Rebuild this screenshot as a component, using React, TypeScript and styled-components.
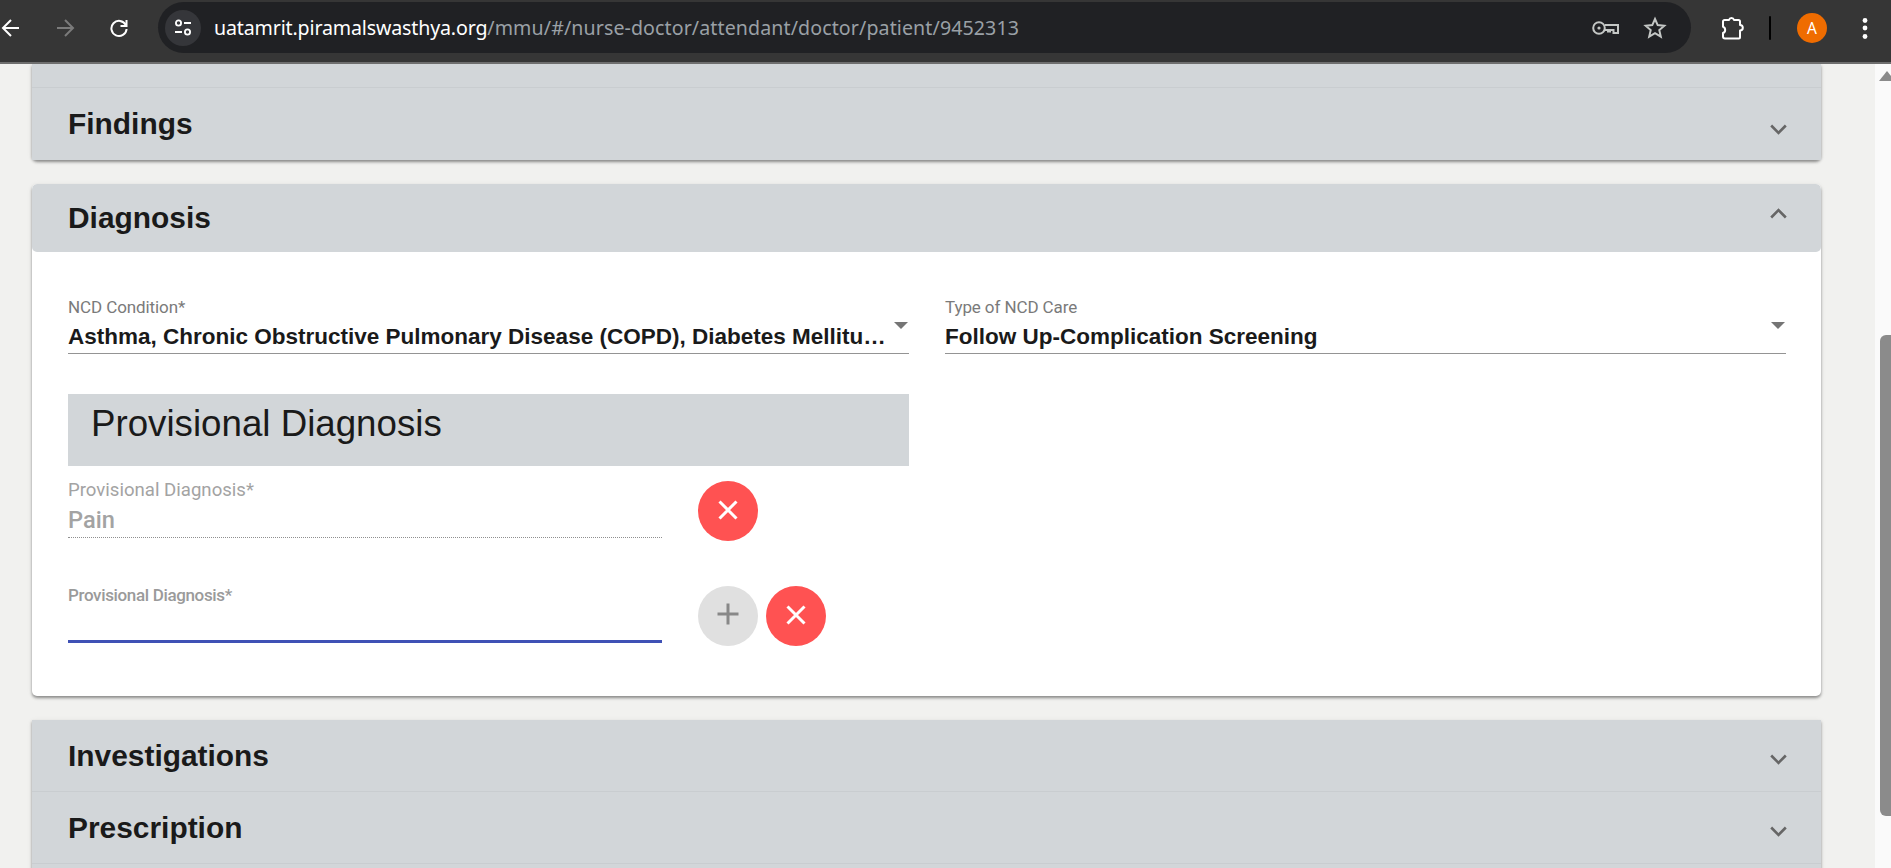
import React from "react";
import styled, { createGlobalStyle } from "styled-components";

const Global = createGlobalStyle`
  html, body { margin: 0; padding: 0; height: 100%; overflow: hidden; background: #f1f1ef; }
  #root { height: 100%; }
  * { box-sizing: border-box; }
`;

const Shell = styled.div`
  width: 1891px;
  height: 868px;
  display: flex;
  flex-direction: column;
  overflow: hidden;
  font-family: Roboto, "Liberation Sans", sans-serif;
`;

const Toolbar = styled.header`
  flex: none;
  height: 64px;
  background: #363636;
  border-bottom: 2px solid #6e6e6e;
  display: flex;
  align-items: flex-start;
  padding-top: 2px;
`;

const NavGroup = styled.nav`
  display: flex;
  margin-left: -16px;
  margin-right: 12px;
  height: 51px;
`;

const NavSlot = styled.div`
  width: 54px;
  height: 51px;
  display: flex;
  align-items: center;
  justify-content: center;
  color: ${(p: { $dim?: boolean }) => (p.$dim ? "#7b7b7b" : "#ffffff")};
`;

const Omnibox = styled.div`
  width: 1533px;
  height: 51px;
  background: #202124;
  border-radius: 26px;
  display: flex;
  align-items: center;
  padding: 0 12px 0 7px;
`;

const SiteChip = styled.div`
  width: 36px;
  height: 36px;
  border-radius: 50%;
  background: #35363a;
  display: flex;
  align-items: center;
  justify-content: center;
  color: #fff;
  margin-right: 13px;
`;

const Url = styled.div`
  flex: 1;
  font-family: "Noto Sans", sans-serif;
  font-size: 19.6px;
  letter-spacing: 0.1px;
  color: #9aa0a6;
  white-space: nowrap;
`;

const Host = styled.span`
  color: #ffffff;
  letter-spacing: -0.15px;
`;

const OmniIcon = styled.div`
  width: 48px;
  display: flex;
  justify-content: center;
  color: #c4c7c5;
`;

const ToolArea = styled.div`
  flex: 1;
  height: 51px;
  display: flex;
  align-items: center;
  color: #fff;
  padding-left: 29px;
`;

const Separator = styled.div`
  width: 2px;
  height: 24px;
  border-radius: 1px;
  background: #000;
  margin: 0 26px 0 24px;
`;

const Avatar = styled.div`
  width: 30px;
  height: 30px;
  border-radius: 50%;
  background: #ef6c00;
  color: #fff;
  font-size: 15.5px;
  font-family: "Noto Sans", sans-serif;
  display: flex;
  align-items: center;
  justify-content: center;
  margin-right: 35px;
`;

const Body = styled.div`
  flex: 1;
  min-height: 0;
  display: flex;
`;

const Page = styled.main`
  flex: 1;
  min-width: 0;
  padding: 0 54px 0 32px;
  overflow: hidden;
  display: flex;
  flex-direction: column;
  gap: 24px;
`;

const Group = styled.section`
  flex: none;
  border-radius: 0 0 5px 5px;
  box-shadow: 0 2px 3px rgba(0, 0, 0, 0.4), 0 1px 6px rgba(0, 0, 0, 0.06);
  background: #d2d6d9;
`;

const Stub = styled.div`
  height: 24px;
  border-bottom: 1px solid #c9cdd0;
`;

const PanelHeader = styled.div<{ $divider?: boolean }>`
  height: 72px;
  background: #d2d6d9;
  display: flex;
  align-items: center;
  justify-content: space-between;
  padding: 0 34px 0 36px;
  border-bottom: ${(p) => (p.$divider ? "1px solid #c9cdd0" : "0")};
`;

const PanelTitle = styled.h2`
  margin: 0;
  font-family: "Liberation Sans", Arial, sans-serif;
  font-size: 29.9px;
  font-weight: 700;
  color: #1a1a1a;
`;

const Chevron = styled.svg<{ $offset: number }>`
  width: 17px;
  height: 11px;
  color: #666;
  transform: translateY(${(p) => p.$offset}px);
`;

const Card = styled.section`
  flex: none;
  border-radius: 5px;
  background: #fff;
  box-shadow: 0 2px 3px rgba(0, 0, 0, 0.4), 0 1px 6px rgba(0, 0, 0, 0.06);
  overflow: hidden;
`;

const RoundedHeader = styled(PanelHeader)`
  height: 68px;
  border-radius: 5px;
`;

const CardBody = styled.div`
  padding: 46px 36px 50px;
  display: grid;
  grid-template-columns: 841px 841px;
  column-gap: 36px;
  align-items: start;
`;

const SelectField = styled.div`
  position: relative;
  height: 56px;
  border-bottom: 1px solid #949494;
  display: flex;
  flex-direction: column;
`;

const FloatLabel = styled.label<{ $variant: "select" | "rest" | "focus" }>`
  display: block;
  font-size: ${(p) => (p.$variant === "rest" ? 18.6 : 17)}px;
  line-height: 18px;
  font-weight: ${(p) => (p.$variant === "focus" ? 500 : 400)};
  letter-spacing: ${(p) => (p.$variant === "focus" ? "-0.35px" : p.$variant === "select" ? "-0.1px" : "0")};
  color: ${(p) => (p.$variant === "select" ? "#7a7a7a" : p.$variant === "rest" ? "#a3a3a3" : "#9a9a9a")};
  white-space: nowrap;
`;

const SelectValue = styled.div`
  margin-top: 7px;
  font-family: "Liberation Sans", Arial, sans-serif;
  font-size: 22.5px;
  line-height: 28px;
  font-weight: 700;
  color: #1a1a1a;
  white-space: nowrap;
`;

const Caret = styled.span`
  position: absolute;
  right: 1px;
  top: 24px;
  width: 0;
  height: 0;
  border-left: 7px solid transparent;
  border-right: 7px solid transparent;
  border-top: 7px solid #757575;
`;

const LeftColumn = styled.div`
  margin-top: 40px;
  grid-column: 1;
`;

const SectionBand = styled.div`
  height: 72px;
  background: #d2d6d9;
  padding: 8px 23px 0;
  font-family: "Liberation Sans", Arial, sans-serif;
  font-size: 36.7px;
  line-height: 44px;
  color: #1a1a1a;
`;

const DiagRow = styled.div<{ $top: number }>`
  margin-top: ${(p) => p.$top}px;
  display: flex;
  align-items: flex-start;
`;

const InputField = styled.div`
  width: 594px;
`;

const DisabledValue = styled.div`
  height: 32px;
  margin-top: 7px;
  font-size: 23.6px;
  line-height: 29px;
  font-weight: 500;
  color: #a3a3a3;
  border-bottom: 1px dotted #8f8f8f;
`;

const FocusLine = styled.div`
  margin-top: 36px;
  height: 3px;
  background: #3f51b5;
`;

const Actions = styled.div`
  margin-left: 36px;
  display: flex;
  gap: 8px;
`;

const RoundButton = styled.button<{ $kind: "add" | "remove" }>`
  width: 60px;
  height: 60px;
  padding: 0 0 ${(p) => (p.$kind === "remove" ? 2 : 4)}px;
  border: 0;
  border-radius: 50%;
  display: flex;
  align-items: center;
  justify-content: center;
  background: ${(p) => (p.$kind === "remove" ? "#ff5252" : "#e0e0e0")};
  color: ${(p) => (p.$kind === "remove" ? "#ffffff" : "#888888")};
`;

const ScrollTrack = styled.aside`
  flex: none;
  width: 16px;
  background: #fafafa;
  display: flex;
  flex-direction: column;
  align-items: flex-end;
`;

const ScrollArrow = styled.div`
  margin: 7px -4px 0 0;
  width: 0;
  height: 0;
  border-left: 8px solid transparent;
  border-right: 8px solid transparent;
  border-bottom: 10px solid #8a8a8a;
`;

const ScrollThumb = styled.div`
  margin-top: 254px;
  width: 11px;
  height: 481px;
  background: #8b8b8b;
  border-radius: 6px 0 0 6px;
`;

const ChevDown = ({ offset = 4 }: { offset?: number }) => (
  <Chevron $offset={offset} viewBox="0 0 17 11" fill="none" stroke="currentColor" strokeWidth="2.6">
    <path d="M1.2 1.5 8.5 8.8 15.8 1.5" />
  </Chevron>
);

const ChevUp = () => (
  <Chevron $offset={-5} viewBox="0 0 17 11" fill="none" stroke="currentColor" strokeWidth="2.6">
    <path d="M1.2 9.5 8.5 2.2 15.8 9.5" />
  </Chevron>
);

const CloseIcon = () => (
  <svg width="22" height="22" viewBox="0 0 22 22" fill="none" stroke="currentColor" strokeWidth="3">
    <path d="M2.5 2.5 19.5 19.5M19.5 2.5 2.5 19.5" />
  </svg>
);

const PlusIcon = () => (
  <svg width="22" height="22" viewBox="0 0 22 22" fill="none" stroke="currentColor" strokeWidth="3">
    <path d="M11 .5V21.5M.5 11H21.5" />
  </svg>
);

export default function App() {
  return (
    <Shell>
      <Global />
      <Toolbar>
        <NavGroup>
          <NavSlot>
            <svg width="20" height="20" viewBox="0 0 20 20" fill="none" stroke="currentColor" strokeWidth="2">
              <path d="M18 10H2.5M10 2 2 10l8 8" />
            </svg>
          </NavSlot>
          <NavSlot $dim>
            <svg width="20" height="20" viewBox="0 0 20 20" fill="none" stroke="currentColor" strokeWidth="2">
              <path d="M2 10h15.5M10 2l8 8-8 8" />
            </svg>
          </NavSlot>
          <NavSlot>
            <svg width="20" height="20" viewBox="0 0 20 20" fill="none" stroke="currentColor" strokeWidth="2">
              <path d="M16.8 7A7.6 7.6 0 1 0 17.6 11" />
              <path d="M17.5 2v6h-6" />
            </svg>
          </NavSlot>
        </NavGroup>
        <Omnibox>
          <SiteChip>
            <svg width="20" height="20" viewBox="0 0 20 20" fill="none" stroke="currentColor" strokeWidth="1.8">
              <circle cx="5.5" cy="5" r="2.6" />
              <path d="M11 5h7M2 14h7" />
              <circle cx="14.5" cy="14" r="2.6" />
            </svg>
          </SiteChip>
          <Url>
            <Host>uatamrit.piramalswasthya.org</Host>/mmu/#/nurse-doctor/attendant/doctor/patient/9452313
          </Url>
          <OmniIcon>
            <svg width="27" height="14" viewBox="0 0 27 14" fill="none" stroke="currentColor" strokeWidth="2" style={{ marginLeft: -4 }}>
              <circle cx="7" cy="7" r="5.8" />
              <circle cx="7" cy="7" r="1.6" fill="currentColor" stroke="none" />
              <path d="M12.8 4H26v8h-4.5V9H18v1.5h-2V9h-3.2" />
            </svg>
          </OmniIcon>
          <OmniIcon>
            <svg width="24" height="24" viewBox="0 0 24 24" fill="none" stroke="currentColor" strokeWidth="2">
              <path d="M12 3l2.7 6.1 6.6.6-5 4.4 1.5 6.5L12 17.2l-5.8 3.4 1.5-6.5-5-4.4 6.6-.6z" />
            </svg>
          </OmniIcon>
        </Omnibox>
        <ToolArea>
          <svg width="25" height="24" viewBox="0 0 25 24" fill="none" stroke="currentColor" strokeWidth="2" strokeLinejoin="round">
            <path d="M3 5.5a1.5 1.5 0 0 1 1.5-1.5H9a2.6 2.6 0 0 1 5 0h4.5A1.5 1.5 0 0 1 20 5.5V9a2.8 2.8 0 0 1 0 5.6v6.9a1 1 0 0 1-1 1H5a2 2 0 0 1-2-2v-3.5a3.3 3.3 0 0 0 0-6.2z" />
          </svg>
          <Separator />
          <Avatar>A</Avatar>
          <svg width="6" height="24" viewBox="0 0 6 24" fill="currentColor">
            <circle cx="3" cy="4.5" r="2.4" />
            <circle cx="3" cy="12" r="2.4" />
            <circle cx="3" cy="20.5" r="2.4" />
          </svg>
        </ToolArea>
      </Toolbar>
      <Body>
        <Page>
          <Group>
            <Stub />
            <PanelHeader>
              <PanelTitle>Findings</PanelTitle>
              <ChevDown offset={5} />
            </PanelHeader>
          </Group>
          <Card>
            <RoundedHeader>
              <PanelTitle>Diagnosis</PanelTitle>
              <ChevUp />
            </RoundedHeader>
            <CardBody>
              <SelectField>
                <FloatLabel $variant="select">NCD Condition*</FloatLabel>
                <SelectValue>Asthma, Chronic Obstructive Pulmonary Disease (COPD), Diabetes Mellitu…</SelectValue>
                <Caret />
              </SelectField>
              <SelectField>
                <FloatLabel $variant="select">Type of NCD Care</FloatLabel>
                <SelectValue>Follow Up-Complication Screening</SelectValue>
                <Caret />
              </SelectField>
              <LeftColumn>
                <SectionBand>Provisional Diagnosis</SectionBand>
                <DiagRow $top={15}>
                  <InputField>
                    <FloatLabel $variant="rest">Provisional Diagnosis*</FloatLabel>
                    <DisabledValue>Pain</DisabledValue>
                  </InputField>
                  <Actions>
                    <RoundButton $kind="remove" aria-label="Remove">
                      <CloseIcon />
                    </RoundButton>
                  </Actions>
                </DiagRow>
                <DiagRow $top={45}>
                  <InputField>
                    <FloatLabel $variant="focus">Provisional Diagnosis*</FloatLabel>
                    <FocusLine />
                  </InputField>
                  <Actions>
                    <RoundButton $kind="add" aria-label="Add">
                      <PlusIcon />
                    </RoundButton>
                    <RoundButton $kind="remove" aria-label="Remove">
                      <CloseIcon />
                    </RoundButton>
                  </Actions>
                </DiagRow>
              </LeftColumn>
            </CardBody>
          </Card>
          <Group>
            <PanelHeader $divider>
              <PanelTitle>Investigations</PanelTitle>
              <ChevDown />
            </PanelHeader>
            <PanelHeader $divider>
              <PanelTitle>Prescription</PanelTitle>
              <ChevDown />
            </PanelHeader>
            <PanelHeader />
          </Group>
        </Page>
        <ScrollTrack>
          <ScrollArrow />
          <ScrollThumb />
        </ScrollTrack>
      </Body>
    </Shell>
  );
}
